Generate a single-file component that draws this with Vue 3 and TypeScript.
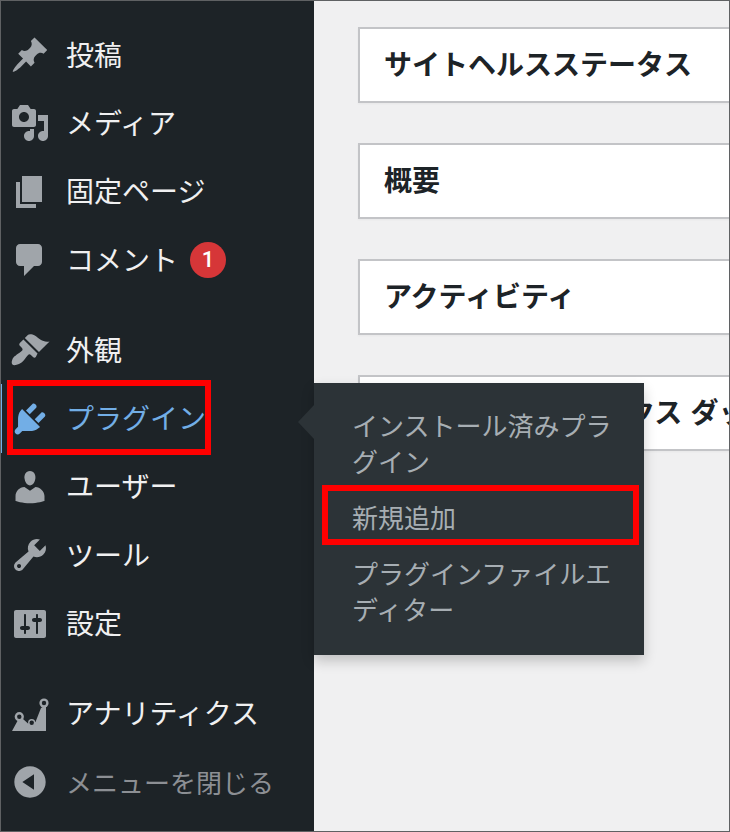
<script setup lang="ts">
interface Item { label: string; d?: string; gapBefore?: boolean; badge?: string; active?: boolean; muted?: boolean; custom?: boolean }
const items: Item[] = [
  { label: '投稿', d: 'M10.44 3.02l1.82-1.82 6.36 6.35-1.83 1.82c-1.05-.68-2.48-.57-3.41.36l-.75.75c-.92.93-1.04 2.35-.35 3.41l-1.83 1.82-2.41-2.41-2.8 2.79c-.42.42-3.38 2.71-3.8 2.29s1.86-3.39 2.28-3.81l2.79-2.79L4.1 9.36l1.83-1.82c1.05.69 2.48.57 3.4-.36l.75-.75c.93-.92 1.05-2.35.36-3.41z' },
  { label: 'メディア', d: 'M13 11V4c0-.55-.45-1-1-1h-1.67L9 1H5L3.67 3H2c-.55 0-1 .45-1 1v7c0 .55.45 1 1 1h10c.55 0 1-.45 1-1zM7 4.5c1.38 0 2.5 1.12 2.5 2.5S8.38 9.5 7 9.5 4.5 8.38 4.5 7 5.62 4.5 7 4.5zM14 6h5v10.5c0 1.38-1.12 2.5-2.5 2.5S14 17.88 14 16.5s1.12-2.5 2.5-2.5c.17 0 .34.02.5.05V9h-3V6zm-4 8.05V13h2v3.5c0 1.38-1.12 2.5-2.5 2.5S7 17.88 7 16.5 8.12 14 9.5 14c.17 0 .34.02.5.05z' },
  { label: '固定ページ', d: 'M6 15V2h10v13H6zm-1 1h8v2H3V5h2v11z' },
  { label: 'コメント', d: 'M5 2h9c1.1 0 2 .9 2 2v7c0 1.1-.9 2-2 2h-2l-5 5v-5H5c-1.1 0-2-.9-2-2V4c0-1.1.9-2 2-2z', badge: '1' },
  { label: '外観', gapBefore: true, d: 'M14.48 11.06L7.41 3.99l1.5-1.5c.5-.56 2.3-.47 3.51.32 1.21.8 1.43 1.28 2.91 2.1 1.18.64 2.45 1.26 4.45.85zm-.71.71L6.7 4.7 4.93 6.47c-.39.39-.39 1.02 0 1.41l1.06 1.06c.39.39.39 1.03 0 1.42-.6.6-1.43 1.11-2.21 1.69-.35.26-.7.53-1.01.84C1.43 13.23.28 16.32 1.2 17.25c.92.92 4.02-.23 5.3-1.57.3-.31.58-.66.84-1.01.58-.78 1.09-1.61 1.69-2.21.39-.39 1.02-.39 1.41 0l1.06 1.06c.39.39 1.02.39 1.41 0z' },
  { label: 'プラグイン', active: true, d: 'M13.11 4.36L9.87 7.6 8 5.73l3.24-3.24c.35-.34 1.05-.2 1.56.32.52.51.66 1.21.31 1.55zm-8 1.77l.91-1.12 9.01 9.01-1.19.84c-.71.71-2.63 1.16-3.82 1.16H6.14L4.9 17.26c-.59.59-1.54.59-2.12 0-.59-.58-.59-1.53 0-2.12l1.24-1.24v-3.88c0-1.13.4-3.19 1.09-3.89zm7.26 3.97l3.24-3.24c.34-.35 1.04-.21 1.55.31.52.51.66 1.21.31 1.55l-3.24 3.25z' },
  { label: 'ユーザー', d: 'M10 9.25c-2.27 0-2.73-3.44-2.73-3.44C7 4.02 7.82 2 9.97 2c2.16 0 2.98 2.02 2.71 3.81 0 0-.41 3.44-2.68 3.44zm0 2.57L12.72 10c2.39 0 4.52 2.33 4.52 4.53v2.49s-3.65 1.13-7.24 1.13c-3.65 0-7.24-1.13-7.24-1.13v-2.49c0-2.25 1.94-4.48 4.47-4.48z' },
  { label: 'ツール', d: 'M16.68 9.77c-1.34 1.34-3.3 1.67-4.95.99l-5.41 6.52c-.99.99-2.59.99-3.58 0s-.99-2.59 0-3.57l6.52-5.42c-.68-1.65-.35-3.61.99-4.95 1.28-1.28 3.12-1.62 4.72-1.06l-2.89 2.89 2.82 2.82 2.86-2.87c.53 1.58.18 3.39-1.08 4.65zM3.81 16.21c.4.39 1.04.39 1.43 0 .4-.4.4-1.04 0-1.43-.39-.4-1.03-.4-1.43 0-.39.39-.39 1.03 0 1.43z' },
  { label: '設定', d: 'M18 16V4c0-.55-.45-1-1-1H3c-.55 0-1 .45-1 1v12c0 .55.45 1 1 1h14c.55 0 1-.45 1-1zM8 11h1c.55 0 1 .45 1 1s-.45 1-1 1H8v1.5c0 .28-.22.5-.5.5s-.5-.22-.5-.5V13H6c-.55 0-1-.45-1-1s.45-1 1-1h1V5.5c0-.28.22-.5.5-.5s.5.22.5.5V11zm5-2h-1c-.55 0-1-.45-1-1s.45-1 1-1h1V5.5c0-.28.22-.5.5-.5s.5.22.5.5V7h1c.55 0 1 .45 1 1s-.45 1-1 1h-1v5.5c0 .28-.22.5-.5.5s-.5-.22-.5-.5V9z' },
  { label: 'アナリティクス', gapBefore: true, custom: true },
  { label: 'メニューを閉じる', muted: true, d: 'M10 2.16c4.33 0 7.84 3.51 7.84 7.84s-3.51 7.84-7.84 7.84S2.16 14.33 2.16 10 5.71 2.16 10 2.16zm2 11.72V6.12L6.18 9.97z' },
]
const cards: string[] = ['サイトヘルスステータス', '概要', 'アクティビティ', 'Google アナリティクス ダッシュボード']
const subItems: { label: string; outlined?: boolean }[] = [
  { label: 'インストール済みプラグイン' },
  { label: '新規追加', outlined: true },
  { label: 'プラグインファイルエディター' },
]
</script>

<template>
  <div class="page">
    <nav class="sidebar">
      <div
        v-for="item in items"
        :key="item.label"
        class="row"
        :class="{ gap: item.gapBefore, active: item.active, muted: item.muted }"
      >
        <span class="icon">
          <svg v-if="item.custom" viewBox="0 0 40 40" width="40" height="40" aria-hidden="true">
            <path d="M2 37 8 26 13 25 18 29.5 25.5 28 31 14 36 11V37Z" fill="currentColor" />
            <circle cx="9.3" cy="22.7" r="4.6" fill="currentColor" />
            <circle cx="21.7" cy="28.7" r="3.6" fill="currentColor" />
            <circle cx="34" cy="9" r="4.6" fill="currentColor" />
            <circle cx="9.3" cy="22.7" r="2.2" fill="#1d2327" />
            <circle cx="21.7" cy="28.7" r="2.2" fill="#1d2327" />
            <circle cx="34" cy="9" r="2.2" fill="#1d2327" />
          </svg>
          <svg v-else viewBox="0 0 20 20" width="40" height="40" aria-hidden="true">
            <path :d="item.d" fill="currentColor" fill-rule="evenodd" />
          </svg>
        </span>
        <span class="label">{{ item.label }}</span>
        <span v-if="item.badge" class="badge">{{ item.badge }}</span>
      </div>
    </nav>

    <main class="main">
      <section v-for="card in cards" :key="card" class="card">
        <h2 class="card-title">{{ card }}</h2>
      </section>
    </main>

    <div class="flyout">
      <span class="flyout-arrow"></span>
      <div v-for="sub in subItems" :key="sub.label" class="flyout-item">
        {{ sub.label }}
        <span v-if="sub.outlined" class="outline outline-sub"></span>
      </div>
    </div>
    <span class="outline outline-plugin"></span>
  </div>
</template>

<style>
html, body { margin: 0; padding: 0; }
</style>

<style scoped>
.page {
  position: relative;
  display: flex;
  width: 730px;
  height: 832px;
  box-sizing: border-box;
  border: 1px solid #5f6163;
  overflow: hidden;
  font-family: "Noto Sans CJK JP", "Noto Sans", sans-serif;
  background: #f0f0f1;
}
.sidebar {
  flex: 0 0 313px;
  box-sizing: border-box;
  padding-top: 20px;
  background: #1d2327;
}
.row {
  display: flex;
  align-items: center;
  height: 68.3px;
  padding-left: 9px;
  color: #f0f0f1;
  font-size: 28px;
  line-height: 36px;
  box-sizing: border-box;
}
.row.gap { margin-top: 22px; }
.icon {
  display: flex;
  flex: none;
  width: 40px;
  height: 40px;
  margin-right: 16px;
  color: #a0a5aa;
}
.label {
  padding-bottom: 3px;
  white-space: nowrap;
}
.row.active { color: #72aee6; box-shadow: inset 1px 0 0 #72aee6; }
.row.active .icon { color: #72aee6; }
.row.muted { color: #8c8f94; font-size: 26px; }
.row.muted .label { padding-bottom: 0; }
.badge {
  width: 36px;
  height: 36px;
  margin-left: 12px;
  border-radius: 50%;
  background: #d63638;
  color: #fff;
  font-family: Roboto, sans-serif;
  font-size: 22px;
  font-weight: 500;
  line-height: 36px;
  text-align: center;
}
.main {
  flex: 1;
  min-width: 0;
  padding: 26px 0 0 44px;
  overflow: hidden;
}
.card {
  width: 600px;
  height: 76px;
  box-sizing: border-box;
  margin-bottom: 40px;
  padding-left: 24px;
  display: flex;
  align-items: center;
  border: 2px solid #c3c4c7;
  background: #fff;
  box-shadow: 0 1px 2px rgba(0, 0, 0, 0.04);
}
.card-title {
  margin: 0;
  padding-bottom: 4px;
  font-size: 28px;
  font-weight: 700;
  line-height: 36px;
  word-spacing: 2px;
  color: #1d2327;
  white-space: nowrap;
}
.flyout {
  position: absolute;
  left: 313px;
  top: 382px;
  width: 330px;
  height: 272px;
  box-sizing: border-box;
  padding: 13.5px 22px 18px 38px;
  background: #2c3337;
  box-shadow: 0 6px 12px rgba(0, 0, 0, 0.2);
}
.flyout-arrow {
  position: absolute;
  left: -16px;
  top: 22px;
  width: 0;
  height: 0;
  border-style: solid;
  border-width: 17px 16px 17px 0;
  border-color: transparent #2c3337 transparent transparent;
}
.flyout-item {
  position: relative;
  padding: 10px 0;
  font-size: 26px;
  line-height: 36px;
  color: #a7aeb3;
}
.outline {
  position: absolute;
  box-sizing: border-box;
  border: 6px solid #f00;
  pointer-events: none;
}
.outline-plugin {
  left: 6px;
  top: 379px;
  width: 204px;
  height: 75px;
}
.outline-sub {
  left: -30px;
  top: -3.5px;
  width: 317px;
  height: 60px;
}
</style>
